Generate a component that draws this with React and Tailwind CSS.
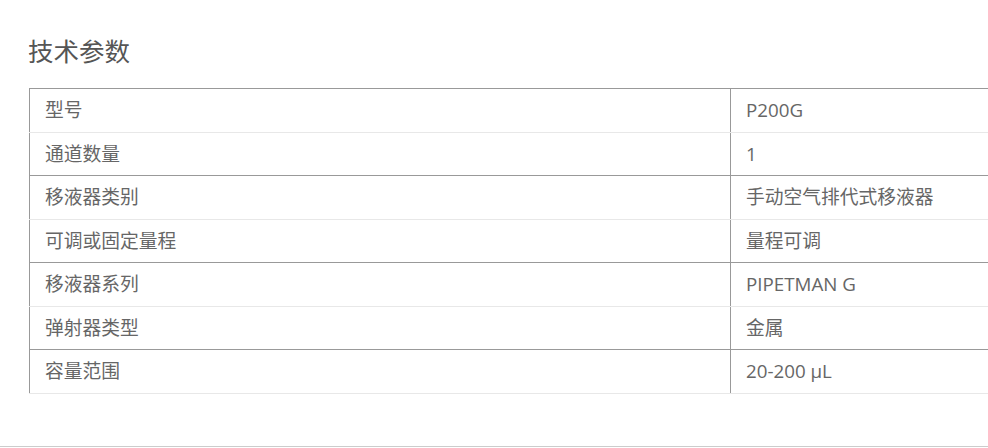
import React from 'react';

const specs = [
  ['型号', 'P200G'],
  ['通道数量', '1'],
  ['移液器类别', '手动空气排代式移液器'],
  ['可调或固定量程', '量程可调'],
  ['移液器系列', 'PIPETMAN G'],
  ['弹射器类型', '金属'],
  ['容量范围', '20-200 µL'],
];

export default function App() {
  return (
    <div
      className="w-[988px] h-[448px] overflow-hidden bg-white text-[#666]"
      style={{ fontFamily: '"Open Sans", "Noto Sans CJK SC", sans-serif' }}
    >
      <div className="h-[446px] pl-[28px] pt-[32px]">
        <h2 className="text-[25.5px] leading-[38px] text-[#555] font-normal">技术参数</h2>

        <div className="mt-[18px] ml-px w-[1000px] border-b border-[#e8e8e8]">
          {specs.map(([label, value], i) => (
            <div
              key={label}
              className={`flex h-[43.5px] border-t ${
                i % 2 === 0 ? 'border-[#999]' : 'border-[#e8e8e8]'
              }`}
            >
              <div className="w-[701px] border-l border-[#999] pl-[15px] flex items-center text-[18.75px]">
                {label}
              </div>
              <div className="flex-1 border-l border-[#999] pl-[15px] flex items-center text-[18.75px]">
                {value}
              </div>
            </div>
          ))}
        </div>
      </div>
      <div className="h-[2px] border-t border-[#ccc]" />
    </div>
  );
}
